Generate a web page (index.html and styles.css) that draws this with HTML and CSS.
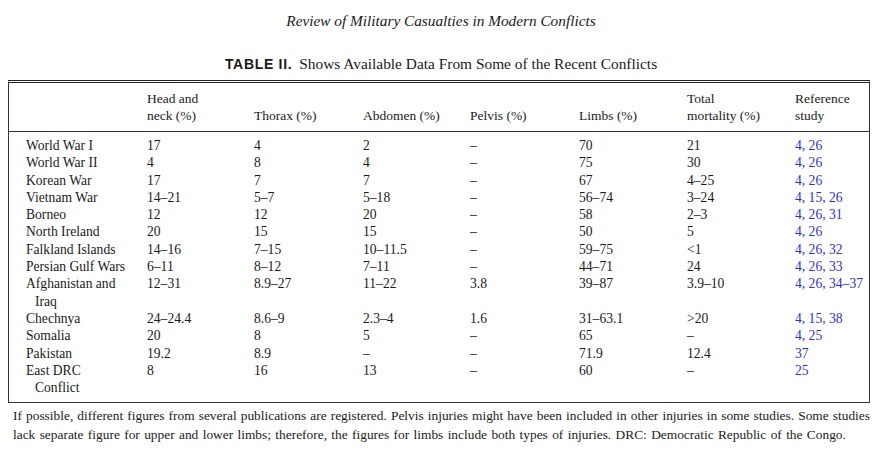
FILE: index.html
```html
<!DOCTYPE html>
<html>
<head>
<meta charset="utf-8">
<link rel="stylesheet" href="styles.css">
</head>
<body>
<div class="page">
  <div class="running-head">Review of Military Casualties in Modern Conflicts</div>
  <div class="caption"><span class="cap-label">TABLE II.</span> Shows Available Data From Some of the Recent Conflicts</div>
  <div class="box">
    <table class="data">
      <colgroup>
        <col class="c1"><col class="c2"><col class="c3"><col class="c4"><col class="c5"><col class="c6"><col class="c7"><col class="c8">
      </colgroup>
      <thead>
        <tr>
          <th></th>
          <th>Head and<br>neck (%)</th>
          <th>Thorax (%)</th>
          <th>Abdomen (%)</th>
          <th>Pelvis (%)</th>
          <th>Limbs (%)</th>
          <th>Total<br>mortality (%)</th>
          <th>Reference<br>study</th>
        </tr>
      </thead>
      <tbody>
        <tr class="first"><td>World War I</td><td>17</td><td>4</td><td>2</td><td>–</td><td>70</td><td>21</td><td class="ref">4, 26</td></tr>
        <tr><td>World War II</td><td>4</td><td>8</td><td>4</td><td>–</td><td>75</td><td>30</td><td class="ref">4, 26</td></tr>
        <tr><td>Korean War</td><td>17</td><td>7</td><td>7</td><td>–</td><td>67</td><td>4–25</td><td class="ref">4, 26</td></tr>
        <tr><td>Vietnam War</td><td>14–21</td><td>5–7</td><td>5–18</td><td>–</td><td>56–74</td><td>3–24</td><td class="ref">4, 15, 26</td></tr>
        <tr><td>Borneo</td><td>12</td><td>12</td><td>20</td><td>–</td><td>58</td><td>2–3</td><td class="ref">4, 26, 31</td></tr>
        <tr><td>North Ireland</td><td>20</td><td>15</td><td>15</td><td>–</td><td>50</td><td>5</td><td class="ref">4, 26</td></tr>
        <tr><td>Falkland Islands</td><td>14–16</td><td>7–15</td><td>10–11.5</td><td>–</td><td>59–75</td><td>&lt;1</td><td class="ref">4, 26, 32</td></tr>
        <tr><td>Persian Gulf Wars</td><td>6–11</td><td>8–12</td><td>7–11</td><td>–</td><td>44–71</td><td>24</td><td class="ref">4, 26, 33</td></tr>
        <tr><td>Afghanistan and<br><span class="indent">Iraq</span></td><td>12–31</td><td>8.9–27</td><td>11–22</td><td>3.8</td><td>39–87</td><td>3.9–10</td><td class="ref">4, 26, 34–37</td></tr>
        <tr><td>Chechnya</td><td>24–24.4</td><td>8.6–9</td><td>2.3–4</td><td>1.6</td><td>31–63.1</td><td>&gt;20</td><td class="ref">4, 15, 38</td></tr>
        <tr><td>Somalia</td><td>20</td><td>8</td><td>5</td><td>–</td><td>65</td><td>–</td><td class="ref">4, 25</td></tr>
        <tr><td>Pakistan</td><td>19.2</td><td>8.9</td><td>–</td><td>–</td><td>71.9</td><td>12.4</td><td class="ref">37</td></tr>
        <tr class="last"><td>East DRC<br><span class="indent">Conflict</span></td><td>8</td><td>16</td><td>13</td><td>–</td><td>60</td><td>–</td><td class="ref">25</td></tr>
      </tbody>
    </table>
  </div>
  <div class="footnote">
    <span class="fn-line fn-justified">If possible, different figures from several publications are registered. Pelvis injuries might have been included in other injuries in some studies. Some studies</span>
    <span class="fn-line fn-last">lack separate figure for upper and lower limbs; therefore, the figures for limbs include both types of injuries. DRC: Democratic Republic of the Congo.</span>
  </div>
</div>
</body>
</html>
```

FILE: styles.css
```css
html, body {
  margin: 0;
  padding: 0;
  background: #ffffff;
}

body {
  font-family: "Liberation Serif", "Times New Roman", serif;
  color: #1a1a1a;
  width: 883px;
  height: 456px;
  overflow: hidden;
}

.page {
  padding: 0 13px 0 8px;
}

.running-head {
  font-style: italic;
  font-size: 15.3px;
  text-align: center;
  padding-top: 12px;
  line-height: 18px;
  margin-left: 4px;
}

.caption {
  text-align: center;
  font-size: 15.4px;
  line-height: 18px;
  margin-top: 25px;
  margin-left: 4px;
}

.cap-label {
  font-family: "Liberation Sans", Arial, sans-serif;
  font-weight: bold;
  font-size: 14px;
  letter-spacing: 0.7px;
  margin-right: 3px;
}

.box {
  margin-top: 7px;
  width: 860px;
  border: 1px solid #333;
  border-top: 3px double #222;
}

.data {
  border-collapse: collapse;
  table-layout: fixed;
  width: 860px;
  font-size: 13.6px;
}

.c1 { width: 138px; }
.c2 { width: 107px; }
.c3 { width: 109px; }
.c4 { width: 107px; }
.c5 { width: 109px; }
.c6 { width: 108px; }
.c7 { width: 108px; }
.c8 { width: 74px; }

.data th {
  font-weight: normal;
  text-align: left;
  vertical-align: bottom;
  font-size: 13.5px;
  line-height: 17px;
  padding: 7px 0 7px 0;
  border-bottom: 1px solid #333;
}

.data th:first-child,
.data td:first-child {
  padding-left: 17px;
}

.data td {
  text-align: left;
  vertical-align: top;
  line-height: 17.3px;
  padding: 0;
  white-space: nowrap;
}

.data tr.first td {
  padding-top: 5px;
}

.data tr.last td {
  padding-bottom: 6px;
}

.indent {
  padding-left: 9px;
}

.ref {
  color: #2f2fd0;
}

.footnote {
  margin: 3px 0 0 5px;
  font-size: 13.4px;
  line-height: 19px;
}

.fn-line {
  display: block;
  white-space: nowrap;
}

.fn-justified {
  text-align: justify;
  text-align-last: justify;
}

.fn-last {
  word-spacing: 1px;
}
```
